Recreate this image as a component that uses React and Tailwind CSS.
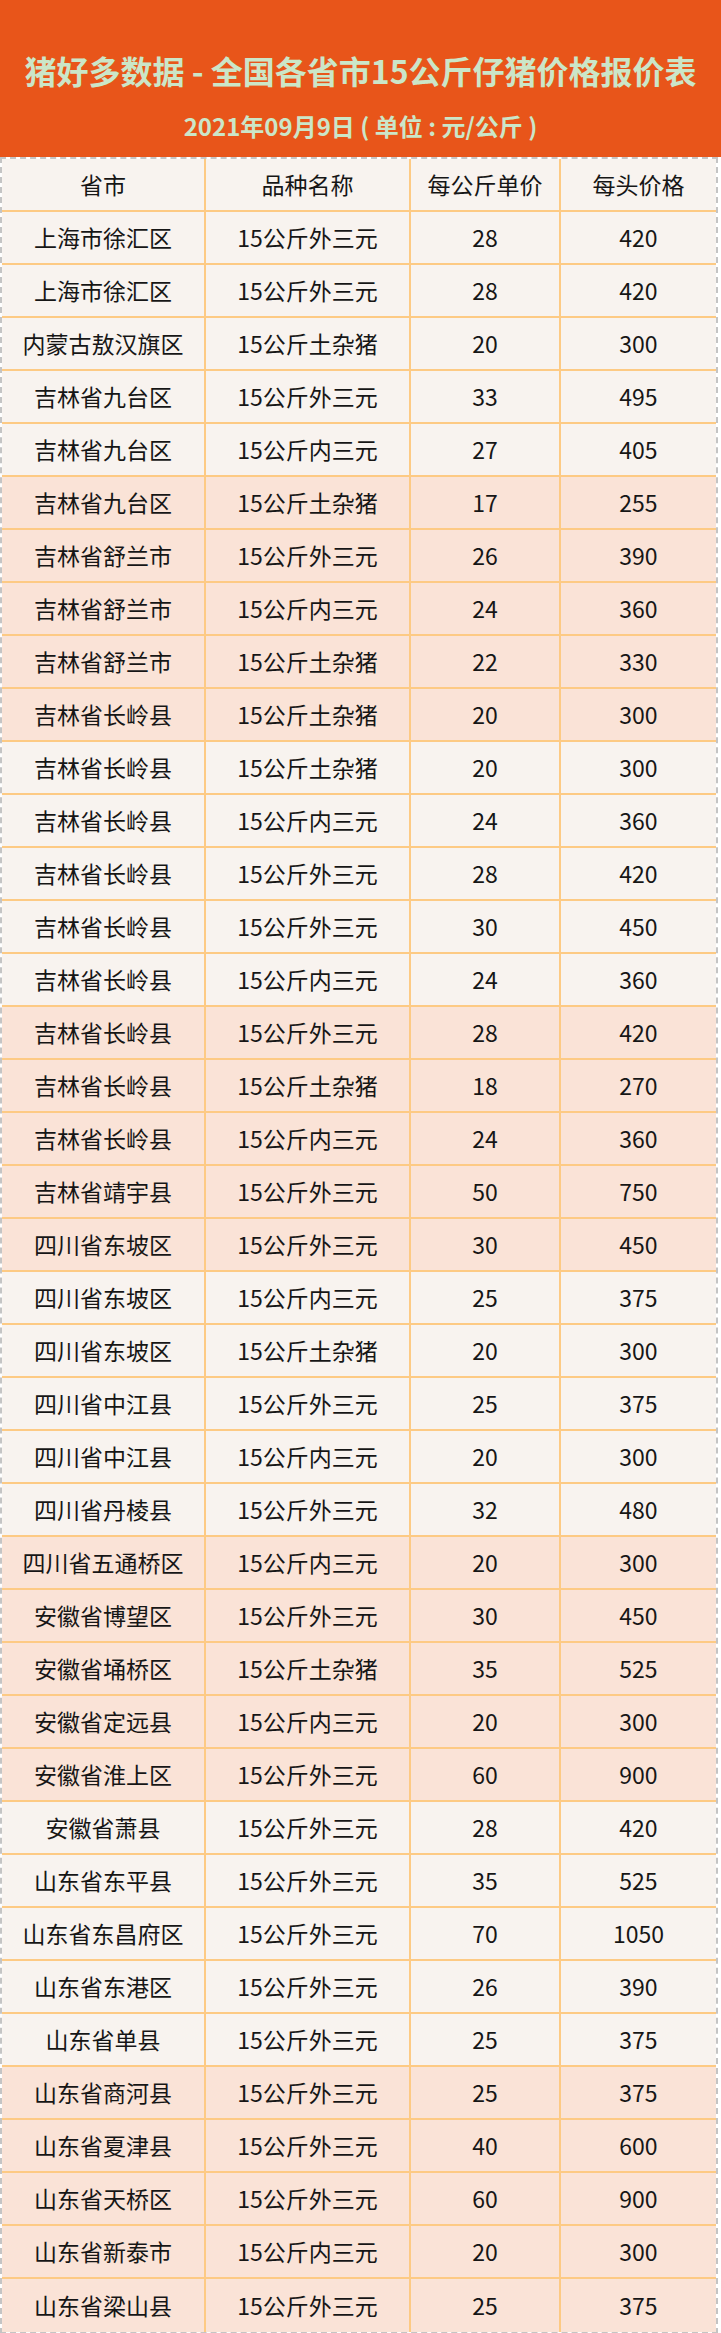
import React from "react";

const rows = [
  ["上海市徐汇区", "15公斤外三元", "28", "420"],
  ["上海市徐汇区", "15公斤外三元", "28", "420"],
  ["内蒙古敖汉旗区", "15公斤土杂猪", "20", "300"],
  ["吉林省九台区", "15公斤外三元", "33", "495"],
  ["吉林省九台区", "15公斤内三元", "27", "405"],
  ["吉林省九台区", "15公斤土杂猪", "17", "255"],
  ["吉林省舒兰市", "15公斤外三元", "26", "390"],
  ["吉林省舒兰市", "15公斤内三元", "24", "360"],
  ["吉林省舒兰市", "15公斤土杂猪", "22", "330"],
  ["吉林省长岭县", "15公斤土杂猪", "20", "300"],
  ["吉林省长岭县", "15公斤土杂猪", "20", "300"],
  ["吉林省长岭县", "15公斤内三元", "24", "360"],
  ["吉林省长岭县", "15公斤外三元", "28", "420"],
  ["吉林省长岭县", "15公斤外三元", "30", "450"],
  ["吉林省长岭县", "15公斤内三元", "24", "360"],
  ["吉林省长岭县", "15公斤外三元", "28", "420"],
  ["吉林省长岭县", "15公斤土杂猪", "18", "270"],
  ["吉林省长岭县", "15公斤内三元", "24", "360"],
  ["吉林省靖宇县", "15公斤外三元", "50", "750"],
  ["四川省东坡区", "15公斤外三元", "30", "450"],
  ["四川省东坡区", "15公斤内三元", "25", "375"],
  ["四川省东坡区", "15公斤土杂猪", "20", "300"],
  ["四川省中江县", "15公斤外三元", "25", "375"],
  ["四川省中江县", "15公斤内三元", "20", "300"],
  ["四川省丹棱县", "15公斤外三元", "32", "480"],
  ["四川省五通桥区", "15公斤内三元", "20", "300"],
  ["安徽省博望区", "15公斤外三元", "30", "450"],
  ["安徽省埇桥区", "15公斤土杂猪", "35", "525"],
  ["安徽省定远县", "15公斤内三元", "20", "300"],
  ["安徽省淮上区", "15公斤外三元", "60", "900"],
  ["安徽省萧县", "15公斤外三元", "28", "420"],
  ["山东省东平县", "15公斤外三元", "35", "525"],
  ["山东省东昌府区", "15公斤外三元", "70", "1050"],
  ["山东省东港区", "15公斤外三元", "26", "390"],
  ["山东省单县", "15公斤外三元", "25", "375"],
  ["山东省商河县", "15公斤外三元", "25", "375"],
  ["山东省夏津县", "15公斤外三元", "40", "600"],
  ["山东省天桥区", "15公斤外三元", "60", "900"],
  ["山东省新泰市", "15公斤内三元", "20", "300"],
  ["山东省梁山县", "15公斤外三元", "25", "375"],
];

function Row({ cells, pink, last }) {
  return (
    <div
      className={
        "grid grid-cols-[204px_205px_150px_155px] h-[53px] " +
        (pink ? "bg-[#fae3d7] " : "bg-[#f8f3ef] ") +
        (last ? "" : "border-b-2 border-[#fdca84]")
      }
    >
      {cells.map((c, i) => (
        <div
          key={i}
          className={
            "flex items-center justify-center text-[23px] text-[#161616] " +
            (i < 3 ? "border-r-2 border-[#fdca84]" : "")
          }
        >
          {c}
        </div>
      ))}
    </div>
  );
}

export default function App() {
  return (
    <div
      className="w-[721px] bg-white"
      style={{ fontFamily: '"Noto Sans CJK SC", "Noto Sans", sans-serif' }}
    >
      <div className="h-[157px] bg-[#e8551a] flex flex-col items-center pt-[54px]">
        <h1 className="text-[32px] leading-[32px] font-bold text-[#cbe6c8]">
          猪好多数据 - 全国各省市15公斤仔猪价格报价表
        </h1>
        <p className="mt-[28px] text-[24px] leading-[24px] font-bold text-[#cbe6c8]">
          2021年09月9日 ( 单位 : 元/公斤 )
        </p>
      </div>
      <div className="w-[718px] border-2 border-dashed border-[#c4c4c4]">
        <Row cells={["省市", "品种名称", "每公斤单价", "每头价格"]} />
        {rows.map((r, i) => (
          <Row
            key={i}
            cells={r}
            pink={Math.floor((i + 5) / 5) % 2 === 0}
            last={i === rows.length - 1}
          />
        ))}
      </div>
    </div>
  );
}
